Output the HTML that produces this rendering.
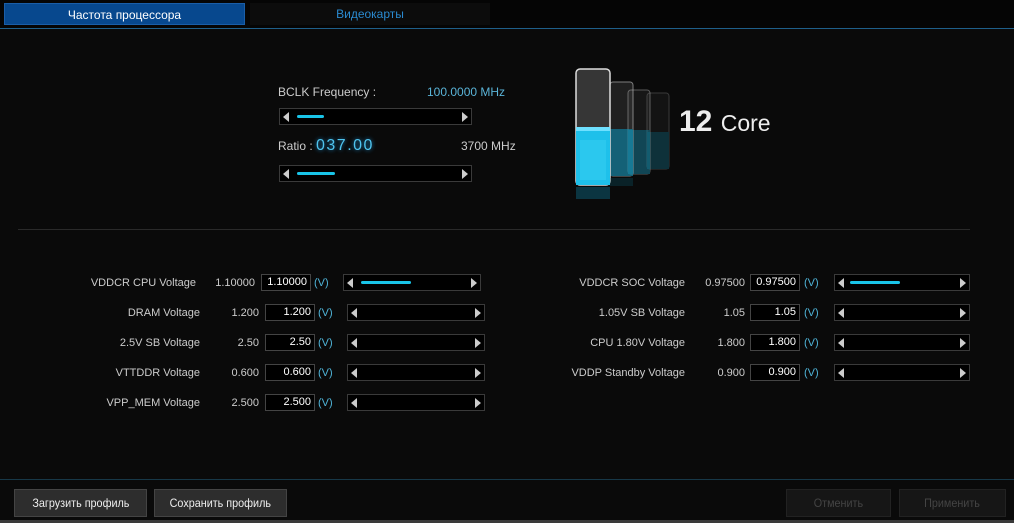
<!DOCTYPE html><html><head><style>
body{margin:0;width:1014px;height:523px;background:#0a0a0a;font-family:"Liberation Sans","Noto Sans CJK SC",sans-serif;color:#ccc;position:relative;overflow:hidden;font-size:11px}
.a{position:absolute}
.tab{top:3px;height:22px;line-height:22px;text-align:center;font-size:12px}
.sl{position:absolute;height:17px;background:#000;border:1px solid #3a3a3a;box-sizing:border-box}
.sl:before{content:"";position:absolute;left:3px;top:3px;border:5px solid transparent;border-right:6px solid #ccc;border-left:0}
.sl:after{content:"";position:absolute;right:3px;top:3px;border:5px solid transparent;border-left:6px solid #ccc;border-right:0}
.bar{position:absolute;top:6px;height:3px;background:#19c4e8;border-radius:2px}
.lb{position:absolute;text-align:right;font-size:11px;color:#ccc}
.bx{position:absolute;height:17px;border:1px solid #444;background:#000;box-sizing:border-box;text-align:right;padding-right:3px;line-height:15px;color:#fff;font-size:11px}
.v{position:absolute;color:#4fb4d8;font-size:11px}
.btn{position:absolute;top:489px;height:28px;background:#2d2d2d;border:1px solid #444;box-sizing:border-box;line-height:26px;text-align:center;font-size:12px;color:#eee}
.btn span{display:inline-block;transform:scaleX(0.9)}
</style></head><body>
<div class="a" style="left:0;top:0;width:1014px;height:29px;background:#050505"></div>
<div class="a tab" style="left:4px;width:241px;background:#07488e;color:#fff;border:1px solid #1a5ea8;box-sizing:border-box">Частота процессора</div>
<div class="a tab" style="left:250px;width:240px;color:#2a8ad0;background:#0c0c0c">Видеокарты</div>
<div class="a" style="left:0;top:28px;width:1014px;height:1px;background:#1e5f8a"></div>

<div class="a" style="left:278px;top:85px;font-size:12px">BCLK Frequency :</div>
<div class="a" style="left:427px;top:85px;font-size:12px;color:#5ab4d8">100.0000 MHz</div>
<div class="sl" style="left:279px;top:108px;width:193px"><div class="bar" style="left:17px;width:27px"></div></div>
<div class="a" style="left:278px;top:139px;font-size:12px">Ratio :</div>
<div class="a" style="left:316px;top:137px;font-size:16px;color:#4fc4ee;letter-spacing:1.5px;text-shadow:0 0 4px #1a8acc">037.00</div>
<div class="a" style="left:461px;top:139px;font-size:12px">3700 MHz</div>
<div class="sl" style="left:279px;top:165px;width:193px"><div class="bar" style="left:17px;width:38px"></div></div>

<svg class="a" style="left:570px;top:60px" width="120" height="140">
<g opacity="0.3"><rect x="77" y="33" width="22" height="76" rx="3" fill="rgba(255,255,255,0.12)" stroke="#aaa"/><rect x="77" y="72" width="22" height="37" fill="#1a8aa8"/></g>
<g opacity="0.45"><rect x="58" y="30" width="22" height="84" rx="3" fill="rgba(255,255,255,0.12)" stroke="#bbb"/><rect x="58" y="70" width="22" height="44" fill="#1a90b0"/></g>
<g opacity="0.6"><rect x="40" y="22" width="23" height="94" rx="3" fill="rgba(255,255,255,0.15)" stroke="#ccc"/><rect x="40" y="69" width="23" height="47" fill="#1b9cc0"/></g>
<rect x="6" y="9" width="34" height="116" rx="4" fill="rgba(255,255,255,0.18)" stroke="#ddd" stroke-width="1.5"/>
<rect x="6" y="67" width="34" height="58" fill="#1ec0ea"/>
<rect x="6" y="67" width="34" height="4" fill="#6ee0ff"/>
<rect x="10" y="80" width="26" height="40" fill="#3fd4f6" opacity="0.4"/>
<rect x="6" y="127" width="34" height="12" fill="#0d6a85" opacity="0.45"/>
<rect x="40" y="118" width="23" height="8" fill="#0d6a85" opacity="0.25"/>
</svg>
<div class="a" style="left:679px;top:105px;font-size:30px;color:#eee;font-weight:bold">12 <span style="font-size:23px;font-weight:normal">Core</span></div>

<div class="a" style="left:18px;top:229px;width:952px;height:1px;background:#2a2a2a"></div>

<div class="lb" style="left:40px;width:156px;top:277px">VDDCR CPU Voltage</div><div class="lb" style="left:200px;width:55px;top:277px">1.10000</div><div class="bx" style="left:261px;top:274px;width:50px">1.10000</div><div class="v" style="left:314px;top:277px">(V)</div><div class="sl" style="left:343px;top:274px;width:138px"><div class="bar" style="left:17px;width:50px"></div></div>
<div class="lb" style="left:40px;width:160px;top:307px">DRAM Voltage</div><div class="lb" style="left:200px;width:59px;top:307px">1.200</div><div class="bx" style="left:265px;top:304px;width:50px">1.200</div><div class="v" style="left:318px;top:307px">(V)</div><div class="sl" style="left:347px;top:304px;width:138px"></div>
<div class="lb" style="left:40px;width:160px;top:337px">2.5V SB Voltage</div><div class="lb" style="left:200px;width:59px;top:337px">2.50</div><div class="bx" style="left:265px;top:334px;width:50px">2.50</div><div class="v" style="left:318px;top:337px">(V)</div><div class="sl" style="left:347px;top:334px;width:138px"></div>
<div class="lb" style="left:40px;width:160px;top:367px">VTTDDR Voltage</div><div class="lb" style="left:200px;width:59px;top:367px">0.600</div><div class="bx" style="left:265px;top:364px;width:50px">0.600</div><div class="v" style="left:318px;top:367px">(V)</div><div class="sl" style="left:347px;top:364px;width:138px"></div>
<div class="lb" style="left:40px;width:160px;top:397px">VPP_MEM Voltage</div><div class="lb" style="left:200px;width:59px;top:397px">2.500</div><div class="bx" style="left:265px;top:394px;width:50px">2.500</div><div class="v" style="left:318px;top:397px">(V)</div><div class="sl" style="left:347px;top:394px;width:138px"></div>

<div class="lb" style="left:525px;width:160px;top:277px">VDDCR SOC Voltage</div><div class="lb" style="left:690px;width:55px;top:277px">0.97500</div><div class="bx" style="left:750px;top:274px;width:50px">0.97500</div><div class="v" style="left:804px;top:277px">(V)</div><div class="sl" style="left:834px;top:274px;width:136px"><div class="bar" style="left:15px;width:50px"></div></div>
<div class="lb" style="left:525px;width:160px;top:307px">1.05V SB Voltage</div><div class="lb" style="left:690px;width:55px;top:307px">1.05</div><div class="bx" style="left:750px;top:304px;width:50px">1.05</div><div class="v" style="left:804px;top:307px">(V)</div><div class="sl" style="left:834px;top:304px;width:136px"></div>
<div class="lb" style="left:525px;width:160px;top:337px">CPU 1.80V Voltage</div><div class="lb" style="left:690px;width:55px;top:337px">1.800</div><div class="bx" style="left:750px;top:334px;width:50px">1.800</div><div class="v" style="left:804px;top:337px">(V)</div><div class="sl" style="left:834px;top:334px;width:136px"></div>
<div class="lb" style="left:525px;width:160px;top:367px">VDDP Standby Voltage</div><div class="lb" style="left:690px;width:55px;top:367px">0.900</div><div class="bx" style="left:750px;top:364px;width:50px">0.900</div><div class="v" style="left:804px;top:367px">(V)</div><div class="sl" style="left:834px;top:364px;width:136px"></div>

<div class="a" style="left:0;top:479px;width:1014px;height:1px;background:#173848"></div>
<div class="btn" style="left:14px;width:133px"><span>Загрузить профиль</span></div>
<div class="btn" style="left:154px;width:133px"><span>Сохранить профиль</span></div>
<div class="btn" style="left:786px;width:105px;background:#161616;border-color:#222;color:#444"><span>Отменить</span></div>
<div class="btn" style="left:899px;width:107px;background:#161616;border-color:#222;color:#444"><span>Применить</span></div>
<div class="a" style="left:0;top:520px;width:1014px;height:3px;background:#3a3a3a"></div>
</body></html>
